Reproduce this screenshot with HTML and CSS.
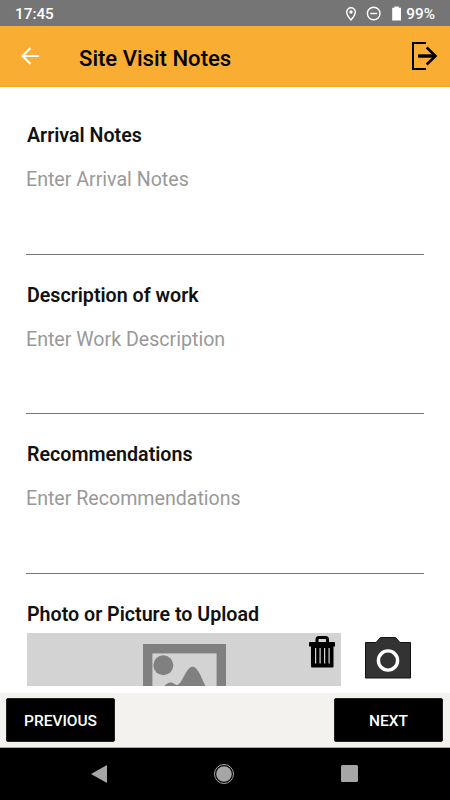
FILE: index.html
```html
<!DOCTYPE html>
<html lang="en">
<head>
    <meta charset="UTF-8" />
    <meta name="viewport" content="width=device-width, initial-scale=1.0" />
    <title>Site Visit Notes</title>
    <link rel="stylesheet" href="styles.css">
</head>
<body>
  <div class="status-bar">
    <span class="time">17:45</span>
    <svg class="status-icons" width="56" height="16" viewBox="0 0 56 16">
      <path d="M6 1.700a4.300 4.300 0 0 0-4.300 4.300C1.700 9.200 6 14 6 14s4.300-4.800 4.300-8A4.300 4.300 0 0 0 6 1.700z" fill="none" stroke="#fff" stroke-width="1.400" />
      <circle cx="6" cy="6" r="1.700" fill="#fff" />
      <circle cx="28.700" cy="7.500" r="6.300" fill="none" stroke="#fff" stroke-width="1.400" />
      <path d="M25.300 7.500h6.800" stroke="#fff" stroke-width="1.400" />
      <path d="M47.200 1.800h2.200V.5h4.400v1.300H56v12.700h-8.800z" fill="#fff" />
    </svg>
    <span class="battery">99%</span>
  </div>

  <div class="header">
    <svg class="back-icon" width="18" height="18" viewBox="0 0 18 18">
      <path d="M18 9H1.500M9.500 1L1.500 9l8 8" fill="none" stroke="#fff" stroke-width="2" />
    </svg>
    <h1>Site Visit Notes</h1>
    <svg class="logout-icon" width="26" height="28" viewBox="0 0 26 28">
      <path d="M14 1H1v26h13" fill="none" stroke="#000" stroke-width="2" />
      <path d="M6 14h17" stroke="#000" stroke-width="3.400" />
      <path d="M14.700 5.500L23.500 14l-8.800 8.500" fill="none" stroke="#000" stroke-width="2.600" />
    </svg>
  </div>

  <div class="content">
    <div class="field">
      <label for="arrival">Arrival Notes</label>
      <textarea id="arrival" placeholder="Enter Arrival Notes"></textarea>
    </div>
    <div class="field">
      <label for="work">Description of work</label>
      <textarea id="work" placeholder="Enter Work Description"></textarea>
    </div>
    <div class="field">
      <label for="recommendations">Recommendations</label>
      <textarea id="recommendations" placeholder="Enter Recommendations"></textarea>
    </div>

    <!-- PHOTO UPLOAD -->
    <div class="photo-title">Photo or Picture to Upload</div>
    <div class="photo-row">
      <div class="photo">
        <svg class="picture-icon" width="83" height="83" viewBox="0 0 83 83">
          <rect x="4.700" y="4.700" width="73.600" height="73.600" fill="none" stroke="#808080" stroke-width="9.400" />
          <circle cx="20.300" cy="21.200" r="10" fill="#808080" />
          <path d="M13 58C18 46 22 38.500 27.500 38.500c3.500 0 4 2.500 6.500 2.500 5 0 9-18.300 15.500-18.300S59 37 71 60z" fill="#808080" />
        </svg>
        <svg class="trash-icon" width="26" height="32" viewBox="0 0 26 32">
          <path d="M8 6V3.500a2 2 0 0 1 2-2h6.500a2 2 0 0 1 2 2V6" fill="none" stroke="#000" stroke-width="3" />
          <path d="M1 6h24q1 0 1 1v3.500H0V7q0-1 1-1z" fill="#000" />
          <path d="M2 10h22.500v20.500q0 1-1 1H3q-1 0-1-1z" fill="#000" />
          <path d="M6.600 12v15.500M11.100 12v15.500M15.600 12v15.500M20.100 12v15.500" stroke="#d3d3d3" stroke-width="1.200" />
        </svg>
      </div>
      <svg class="camera-icon" width="46" height="42" viewBox="0 0 46 42">
        <path d="M.5 5.500H11L15.500.5h15l4.500 5h10.500v35.500H.5z" fill="#333" stroke="#111" />
        <circle cx="23" cy="23.500" r="9.600" fill="none" stroke="#fff" stroke-width="3.400" />
      </svg>
    </div>
  </div>

  <div class="footer">
    <button>PREVIOUS</button>
    <button>NEXT</button>
  </div>

  <div class="nav-bar">
    <svg width="16" height="20" viewBox="0 0 16 20">
      <path d="M0 10L16 1v18z" fill="#a6a6a6" />
    </svg>
    <svg width="20" height="20" viewBox="0 0 20 20">
      <circle cx="10" cy="10" r="9.500" fill="none" stroke="#a6a6a6" />
      <circle cx="10" cy="10" r="7.800" fill="#a6a6a6" />
    </svg>
    <svg width="17" height="17" viewBox="0 0 17 17">
      <rect width="17" height="17" rx="1.500" fill="#a6a6a6" />
    </svg>
  </div>
</body>
</html>
```
FILE: styles.css
```css
* {
    box-sizing: border-box;
}

body {
    font-family: Roboto, "Liberation Sans", sans-serif;
    margin: 0;
    height: 100vh;
    display: flex;
    flex-direction: column;
    overflow: hidden;
    background: #fff;
}

svg {
    display: block;
    flex-shrink: 0;
}

.status-bar {
    height: 26px;
    background: #757575;
    color: #fff;
    display: flex;
    align-items: center;
    padding: 1px 15px 0 15px;
    font-size: 15.300px;
    font-weight: 500;
}

    .status-bar span {
        padding-top: 1px;
    }

.status-icons {
    margin-left: auto;
    margin-right: 5px;
}

.header {
    height: 61px;
    background: #f9ae33;
    border-bottom: 1px solid #faa61a;
    display: flex;
    align-items: center;
    padding: 0 12px 0 21px;
}

    .header h1 {
        margin: 3px 0 0 40px;
        font-size: 22.100px;
        font-weight: 500;
        color: #000;
    }

.logout-icon {
    margin-left: auto;
}

.content {
    height: 599px;
    padding: 37px 26px 0;
    overflow: hidden;
}

.field {
    height: 159.67px;
}

    .field label,
    .photo-title {
        display: block;
        padding-left: 1px;
        line-height: 24px;
        font-size: 19.650px;
        font-weight: 600;
        color: #111;
    }

    .field textarea {
        display: block;
        width: 100%;
        height: 106.500px;
        padding: 20px 0 0;
        border: none;
        border-bottom: 1px solid #757575;
        background: none;
        font-family: inherit;
        font-size: 19.600px;
        line-height: 24px;
        resize: none;
        outline: none;
    }

    .field textarea::placeholder {
        color: #999;
    }

.photo-row {
    display: flex;
    margin-top: 6px;
    padding-left: 1px;
}

.photo {
    position: relative;
    width: 314px;
    height: 110px;
    padding-top: 11px;
    background: #d3d3d3;
}

.picture-icon {
    margin-left: 116px;
}

/* delete button sits over the photo */
.trash-icon {
    position: absolute;
    top: 3px;
    right: 6px;
}

.camera-icon {
    margin: 4px 0 0 24px;
}

.footer {
    height: 55px;
    margin-top: 7px;
    padding: 5px 7px 0 6px;
    background: #f3f2ee;
    border-bottom: 1px solid #aaa;
    display: flex;
    justify-content: space-between;
}

    .footer button {
        width: 109px;
        height: 44px;
        padding: 2px 0 0;
        border: 1px solid #222;
        border-radius: 2px;
        background: #000;
        color: #fff;
        font-family: inherit;
        font-size: 15.500px;
        font-weight: 500;
    }

.nav-bar {
    flex: 1;
    background: #000;
    display: flex;
    align-items: center;
    justify-content: space-between;
    padding: 0 92px 1px 91px;
}
```
